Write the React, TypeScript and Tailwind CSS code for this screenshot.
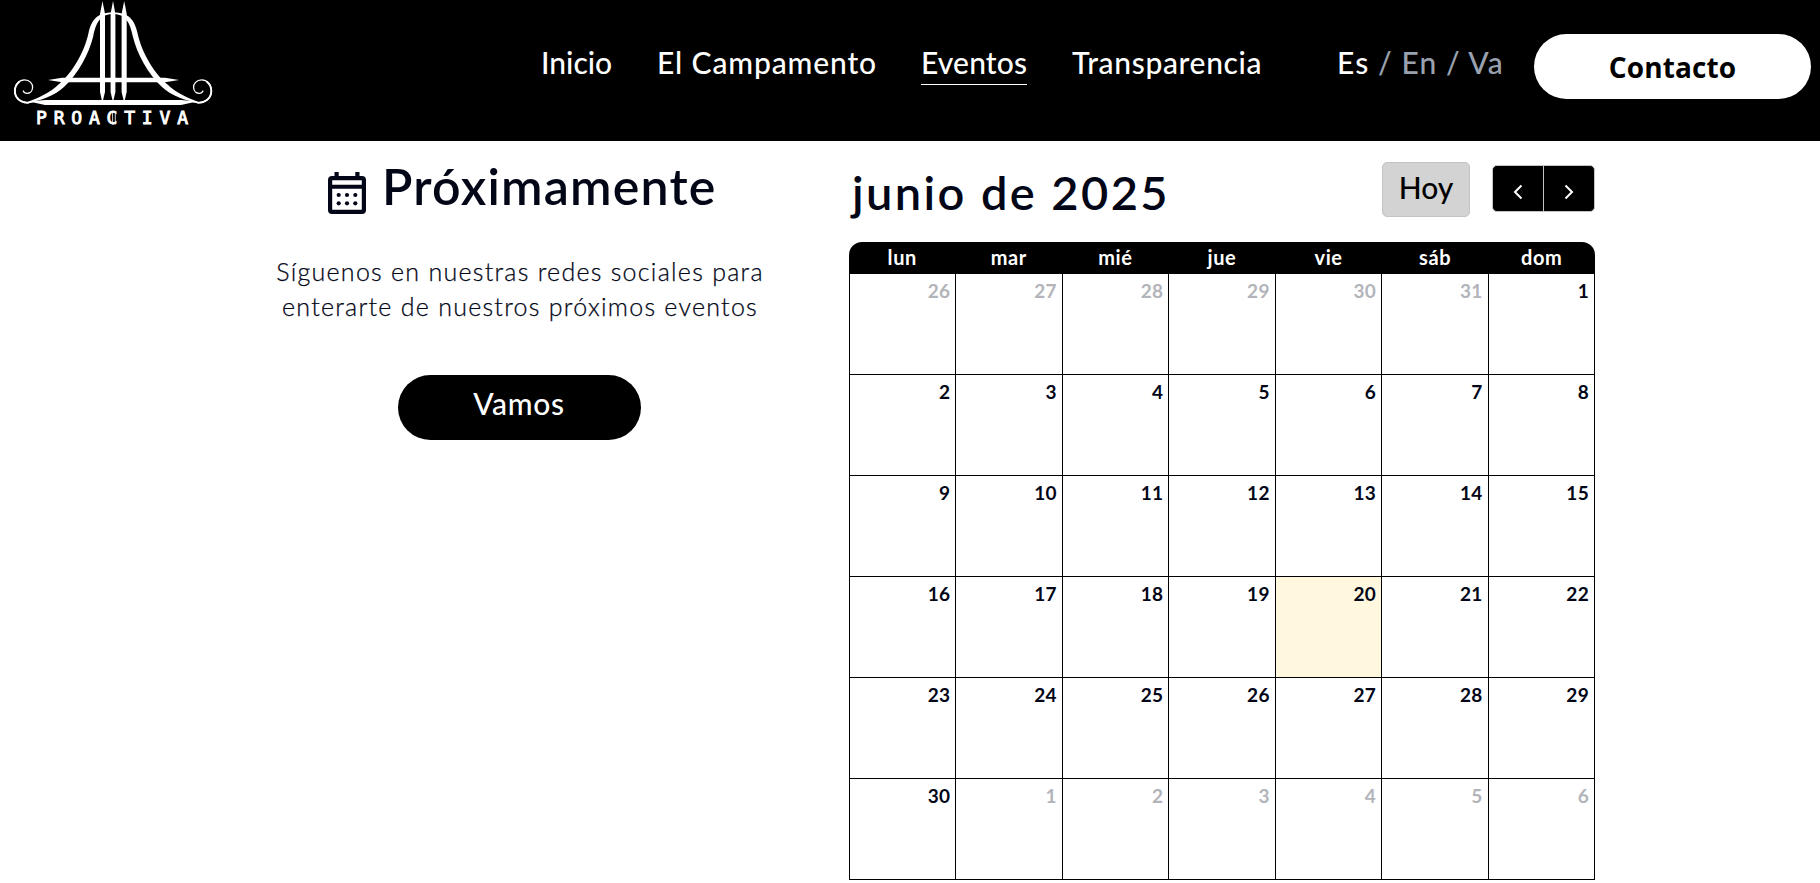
const WEEKDAYS = ["lun", "mar", "mié", "jue", "vie", "sáb", "dom"];

type Day = { label: number; outside: boolean; today: boolean };

const DAYS: Day[] = Array.from({ length: 42 }, (_, i) => {
  const n = i - 5;
  if (n < 1) return { label: n + 31, outside: true, today: false };
  if (n > 30) return { label: n - 30, outside: true, today: false };
  return { label: n, outside: false, today: n === 20 };
});

function Logo() {
  return (
    <svg className="block h-[141px] w-[230px] shrink-0" viewBox="0 0 230 141" fill="none">
      <g fill="#fff">
        <path d="M102.5 1 L105 14 V92 L102.8 101 H102 L100 92 V14 Z" />
        <path d="M113 1 L115.4 14 V92 L113.3 101 H112.7 L110.6 92 V14 Z" />
        <path d="M124.2 1 L126.7 14 V92 L124.5 101 H123.8 L121.6 92 V14 Z" />
        <path d="M48 80 L62 77.8 H165 L179 80 L165 82.2 H62 Z" />
        <path d="M29 101.5 L45 100 H181 L197 101.5 L181 105 H45 Z" />
        <path d="M113 12.6 C97 12.6 91.500 20 88.500 33 C84 54 71 74 58.500 84.500 C50 92.500 38 98.500 25 102.800 C40 101.500 55 95.500 64.500 86.500 C78 74 89 54 93.300 36 C96 23 100 14 113 14 C126 14 130 23 132.700 36 C137 54 148 74 161.500 86.500 C171 95.500 186 101.500 201 102.800 C188 98.500 176 92.500 167.500 84.500 C155 74 142 54 137.500 33 C134.500 20 129 12.600 113 12.600 Z" />
      </g>
      <g stroke="#fff" strokeLinecap="round">
        <path d="M34 101.5 C24 105 14.800 100 14.800 91 C14.800 84 19.500 79.900 24.500 79.900 C30 79.900 32.800 84 32.600 87.500 C32.400 91.500 29.500 93.300 27 93.300 C25 93.300 23.800 92.300 23.300 91" strokeWidth="1.3" />
        <path d="M28 102.900 C20 102.500 14.900 97.500 14.900 91 C14.900 87 16.500 84 19 82" strokeWidth="1.9" />
        <path d="M192 101.500 C202 105 211.400 100 211.400 91 C211.400 84 206.700 79.900 201.700 79.900 C196.200 79.900 193.400 84 193.600 87.500 C193.800 91.500 196.700 93.300 199.200 93.300 C201.200 93.300 202.400 92.300 202.900 91" strokeWidth="1.3" />
        <path d="M198.200 102.900 C206.200 102.500 211.300 97.500 211.300 91 C211.300 87 209.700 84 207.200 82" strokeWidth="1.9" />
      </g>
      <text
        x="36"
        y="124"
        fill="#fff"
        stroke="#fff"
        strokeWidth="0.9"
        className="font-['DejaVu_Sans_Mono',monospace] text-[18px]"
        textLength="152"
      >
        PROACTIVA
      </text>
      <path d="M112.600 111 V124.500 M115.300 111 V124.500" stroke="#fff" strokeWidth="0.8" />
    </svg>
  );
}

function Header() {
  return (
    <header className="flex h-[141px] items-start bg-black text-[30px] leading-[36px] font-medium text-white">
      <Logo />
      <nav className="mt-[44px] ml-[311px] flex gap-[45px] whitespace-nowrap">
        <a className="w-[71px]">Inicio</a>
        <a className="w-[219px] tracking-[0.87px]">El Campamento</a>
        <a className="w-[106px] border-b border-white pb-[4px] tracking-[0.15px]">Eventos</a>
        <a className="w-[190px] tracking-[0.65px]">Transparencia</a>
      </nav>
      <div className="mt-[44px] ml-[75px] w-[197px] tracking-[1.1px] whitespace-pre text-gray-400">
        <span className="text-white">Es</span> / En / Va
      </div>
      <button className="mt-[34px] h-[65px] w-[277px] rounded-full bg-white pt-px font-['Open_Sans',sans-serif] text-[28px] font-bold tracking-[0.1px] text-black">
        Contacto
      </button>
    </header>
  );
}

function CalendarIcon() {
  return (
    <svg className="mt-[16px] mr-[16px] ml-[6px] h-[42px] w-[38px] shrink-0" viewBox="0 0 38 42" fill="currentColor">
      <path
        fillRule="evenodd"
        d="M6.500 0 H10.700 V4 H27.300 V0 H31.500 V4 H34 A4 4 0 0 1 38 8 V38 A4 4 0 0 1 34 42 H4 A4 4 0 0 1 0 38 V8 A4 4 0 0 1 4 4 H6.500 Z M4.200 8.200 V12.700 H33.800 V8.200 Z M4.200 16.800 V37.800 H33.800 V16.800 Z"
      />
      {[10.7, 19, 27.3].map((cx) => (
        <g key={cx}>
          <circle cx={cx} cy="23" r="2.1" />
          <circle cx={cx} cy="31.300" r="2.1" />
        </g>
      ))}
    </svg>
  );
}

function Upcoming() {
  return (
    <section className="flex w-[500px] flex-col items-center">
      <h2 className="mt-[15px] ml-[6px] flex w-[400px] text-[50px] leading-[60px] font-semibold tracking-[1.2px] whitespace-nowrap">
        <CalendarIcon />
        Próximamente
      </h2>
      <p className="mt-[38px] ml-[2px] text-center text-[25px] leading-[35px] font-light tracking-[1.27px] whitespace-nowrap [-webkit-text-stroke:0.25px]">
        Síguenos en nuestras redes sociales para
        <br />
        enterarte de nuestros próximos eventos
      </p>
      <button className="mt-[51px] h-[65px] w-[243px] rounded-full bg-black pb-[9px] text-[30px] leading-[36px] font-medium tracking-[0.7px] text-white">
        Vamos
      </button>
    </section>
  );
}

function Chevron({ flip = false }: { flip?: boolean }) {
  return (
    <svg className="mt-[7px] h-[16px] w-[10px]" viewBox="0 0 10 16" fill="none" stroke="#fff" strokeWidth="2">
      <path d={flip ? "M1.500 1.500 L8 8 L1.500 14.500" : "M8.500 1.500 L2 8 L8.500 14.500"} />
    </svg>
  );
}

function Calendar() {
  return (
    <section className="w-[746px]">
      <div className="flex h-[101px] items-start">
        <h2 className="mt-[23px] ml-[3px] flex-1 text-[47px] leading-[56px] font-semibold tracking-[2.4px] whitespace-nowrap">
          junio de 2025
        </h2>
        <button className="mt-[21px] h-[55px] w-[88px] rounded-[5px] border border-[#c4c4c4] bg-[#d3d3d3] pb-[5px] text-[30px] leading-[36px] font-medium text-black">
          Hoy
        </button>
        <div className="mt-[24px] ml-[22px] flex h-[47px] w-[103px] rounded-[5px] border border-[#c4c4c4] bg-black">
          <button className="flex w-[51px] items-center justify-center border-r border-[#c4c4c4]">
            <Chevron />
          </button>
          <button className="flex w-[50px] items-center justify-center">
            <Chevron flip />
          </button>
        </div>
      </div>
      <div className="grid h-[32px] grid-cols-7 rounded-t-[13px] bg-black pt-px text-center text-[20px] leading-[28px] font-bold tracking-[0.6px] text-white">
        {WEEKDAYS.map((d) => (
          <span key={d}>{d}</span>
        ))}
      </div>
      <div className="grid grid-cols-7 border-l border-black">
        {DAYS.map((d, i) => (
          <div
            key={i}
            className={`h-[101px] border-r border-b border-black pt-[5px] pr-[5px] text-right text-[19px] leading-[24px] font-bold tracking-[0.3px] ${
              d.today ? "bg-[#fff8df]" : ""
            } ${d.outside ? "text-[#b3b4ba]" : ""}`}
          >
            {d.label}
          </div>
        ))}
      </div>
    </section>
  );
}

export default function App() {
  return (
    <div className="min-h-[883px] w-[1820px] overflow-hidden bg-white font-['Lato',sans-serif] text-[#020617]">
      <Header />
      <main className="flex items-start gap-[80px] pl-[269px]">
        <Upcoming />
        <Calendar />
      </main>
    </div>
  );
}
